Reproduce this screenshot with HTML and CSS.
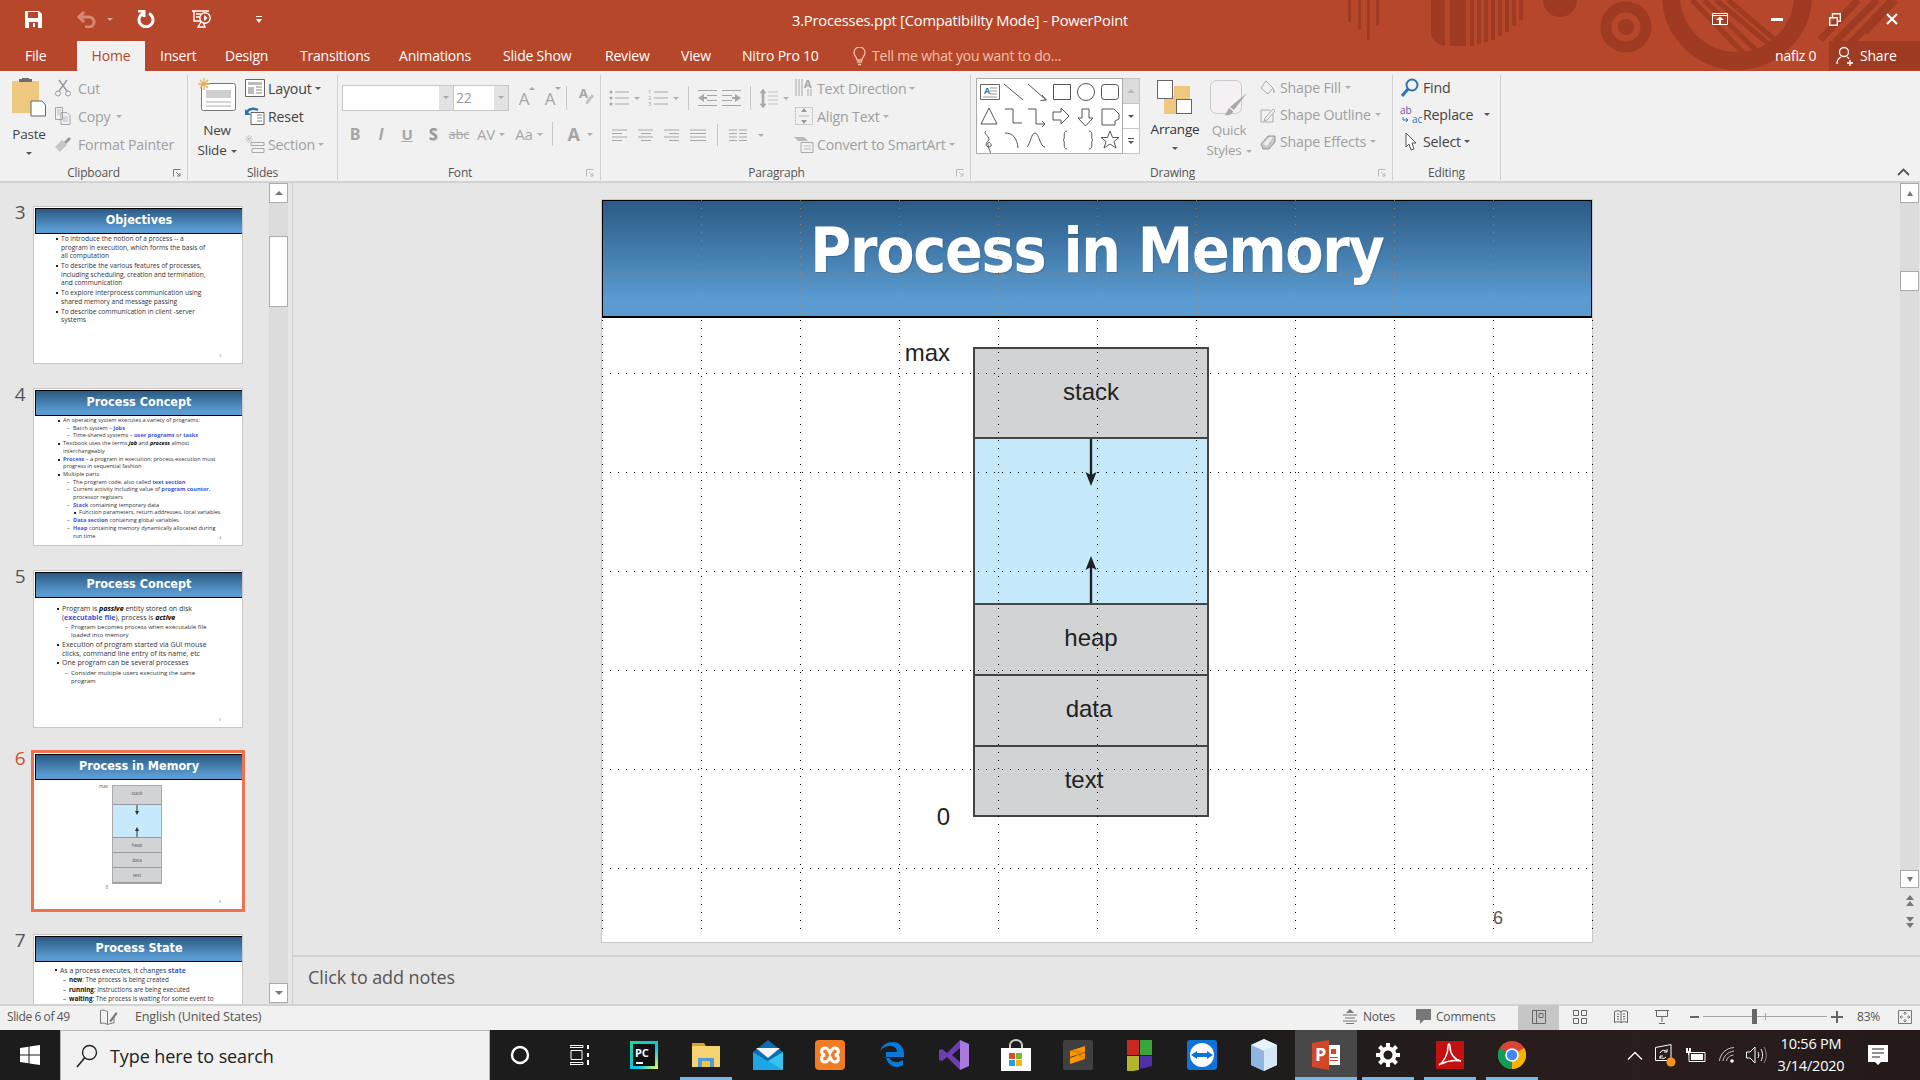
FILE: index.html
```html
<!doctype html>
<html lang="en">
<head>
  <meta charset="utf-8">
  <title>3.Processes.ppt [Compatibility Mode] - PowerPoint</title>
  <link rel="stylesheet" href="styles.css">
</head>

<body>
  <!-- Title bar and tabs -->
  <header class="header">
    <svg class="decor" width="580" height="71" viewBox="0 0 580 71">
      <g fill="#9f3b22">
        <rect x="8" width="3" height="22"/><rect x="18" width="3" height="30"/><rect x="27" width="3" height="40"/><rect x="36" width="3" height="26"/>
        <path d="M91 0h14v46a20 20 0 0 1-14-10z"/>
        <rect x="110" width="16" height="46"/><rect x="130" width="4" height="46"/><rect x="137" width="4" height="44"/><rect x="144" width="4" height="42"/><rect x="151" width="4" height="40"/><rect x="158" width="4" height="36"/><rect x="165" width="4" height="32"/><rect x="172" width="4" height="26"/><rect x="179" width="4" height="20"/>
        <path d="M203 0h34a17 17 0 0 1-34 0z"/>
      </g>
      <circle cx="286" cy="27" r="20" fill="none" stroke="#9f3b22" stroke-width="11"/>
      <circle cx="286" cy="27" r="8" fill="#9f3b22"/>
      <g fill="none" stroke="#9f3b22">
        <circle cx="397" cy="-5" r="66" stroke-width="18"/>
        <path d="M352 0l60 62M364 0l60 58M376 0l60 50M388 0l52 44" stroke-width="5"/>
        <path d="M480 40l38-40M495 42l42-42M510 44l42-44M525 32l30-32" stroke-width="7"/>
      </g>
    </svg>

    <div class="titlebar">
      <div class="qat">
        <svg class="q-save" width="17" height="17" viewBox="0 0 17 17"><path d="M0 0h14l3 3v14H0z" fill="#fff"/><path d="M3 1h10v6H3z" fill="#b7472a"/><path d="M4 11h9v6H4z" fill="#b7472a"/><path d="M8 12h2v4H8z" fill="#fff"/></svg>
        <svg class="q-undo" width="20" height="18" viewBox="0 0 20 18"><path d="M5 7h8a5 5 0 0 1 0 10H9M8 2L3 7l5 5" fill="none" stroke="#d58a75" stroke-width="3"/></svg>
        <i class="caret caret-undo"></i>
        <svg class="q-redo" width="18" height="18" viewBox="0 0 18 18"><path d="M6 3.500a7 7 0 1 0 6 0M7 0v7M7 1H1" fill="none" stroke="#fff" stroke-width="3"/></svg>
        <svg class="q-show" width="20" height="18" viewBox="0 0 20 18"><path d="M0 1h17M2 1v10h7M4 4h5M4 7h4M9 12l-3 5h7l-2-5" fill="none" stroke="#fff" stroke-width="1.400"/><circle cx="13" cy="8" r="5.200" fill="none" stroke="#fff" stroke-width="1.400"/><path d="M12 5l3.500 3-3.500 3z" fill="#fff"/></svg>
        <svg class="q-more" width="6" height="7" viewBox="0 0 6 7"><path d="M0 0h6v1H0zM0 3h6L3 7z" fill="#fff"/></svg>
      </div>
      <div class="doc-title">3.Processes.ppt [Compatibility Mode] - PowerPoint</div>
      <div class="winctl">
        <svg class="w-display" width="16" height="12" viewBox="0 0 16 12"><path d="M.5.500h15v11H.5zM1 2.500h14" fill="none" stroke="#fff"/><path d="M8 3.500l4 3.500H9v4H7V7H4z" fill="#fff"/></svg>
        <svg class="w-min" width="12" height="3" viewBox="0 0 12 3"><path d="M0 0h12v3H0z" fill="#fff"/></svg>
        <svg class="w-max" width="12" height="13" viewBox="0 0 12 13"><path d="M.7 4.700h7.600v7.600H.7zM3.500 4V.7h7.800v7.600H9" fill="none" stroke="#fff" stroke-width="1.400"/></svg>
        <svg class="w-close" width="12" height="12" viewBox="0 0 12 12"><path d="M1 1l10 10M11 1L1 11" stroke="#fff" stroke-width="2.200"/></svg>
      </div>
    </div>

    <nav class="tabs">
      <a class="tab tab-file">File</a>
      <a class="tab tab-home">Home</a>
      <a class="tab tab-insert">Insert</a>
      <a class="tab tab-design">Design</a>
      <a class="tab tab-trans">Transitions</a>
      <a class="tab tab-anim">Animations</a>
      <a class="tab tab-show">Slide Show</a>
      <a class="tab tab-review">Review</a>
      <a class="tab tab-view">View</a>
      <a class="tab tab-nitro">Nitro Pro 10</a>
      <div class="tell">
        <svg width="13" height="19" viewBox="0 0 13 19"><path d="M4 13c0-3-3-4-3-7.500a5.500 5.500 0 0 1 11 0C12 9 9 10 9 13zM4 15h5M5 17.500h3" fill="none" stroke="#efc0ae" stroke-width="1.300"/></svg>
        <span>Tell me what you want to do...</span>
      </div>
      <div class="account">nafiz 0</div>
      <div class="share">
        <svg width="20" height="20" viewBox="0 0 20 20"><circle cx="8" cy="6" r="4.500" fill="none" stroke="#fff" stroke-width="1.300"/><path d="M1 18c0-4 2-6 4-7M11 11c1 .5 2 1 2 2M14 14v6M11 17h6" fill="none" stroke="#fff" stroke-width="1.300"/></svg>
        <span>Share</span>
      </div>
    </nav>
  </header>

  <!-- Ribbon -->
  <div class="ribbon">
    <section class="group g-clipboard">
      <div class="group-body">
        <div class="big big-paste">
          <svg width="34" height="39" viewBox="0 0 34 39"><path d="M0 3h27v32H0z" fill="#edc87e"/><path d="M7 3h13V0h-3v-1h-7v1H7z" fill="#6d6d6d" transform="translate(0 1)"/><path d="M19 23h11l3.500 4v11H19z" fill="#fff" stroke="#666"/></svg>
          <span class="big-text">Paste</span>
          <i class="caret caret-dark"></i>
        </div>
        <div class="cmds">
          <div class="cmd off"><svg class="ic18" viewBox="0 0 18 18"><path d="M5 1l8 11M13 1L5 12" stroke="#999" stroke-width="1.400"/><circle cx="4" cy="14.500" r="2.500" fill="none" stroke="#999"/><circle cx="14" cy="14.500" r="2.500" fill="none" stroke="#999"/></svg><span>Cut</span></div>
          <div class="cmd off"><svg class="ic18" viewBox="0 0 18 18"><path d="M1.500.5h7v12h-7zM7 5.500h6l3 3v9H7z" fill="#f1f1f1" stroke="#a5a5a5"/><path d="M9 10h5M9 12h5M9 14h5M3 3h4M3 5h3M3 7h3" stroke="#bbb"/></svg><span>Copy</span><i class="caret"></i></div>
          <div class="cmd off"><svg class="ic18" viewBox="0 0 18 18"><path d="M1 12l7-7 5 5-7 7z" fill="#c7c7c7"/><path d="M10 7l5-5 2 2-5 5z" fill="#9a9a9a"/></svg><span>Format Painter</span></div>
        </div>
      </div>
      <div class="group-label">Clipboard<svg class="launch" width="8" height="8" viewBox="0 0 8 8"><path d="M.5 7.500v-7h7M3 3l4 4M7 4v3H4" fill="none" stroke="#777"/></svg></div>
    </section>

    <section class="group g-slides">
      <div class="group-body">
        <div class="big big-new">
          <svg width="38" height="34" viewBox="0 0 38 34"><rect x="3.500" y="5.500" width="34" height="27" rx="2" fill="#fff" stroke="#777"/><path d="M8 12h25v8H8z" fill="#cfcfcf"/><path d="M8 24h25M8 28h25" stroke="#aaa"/><path d="M6 0v12M0 6h12M2 2l8 8M10 2l-8 8" stroke="#e6b25a" stroke-width="1.300"/></svg>
          <span class="big-text big-new-text">New</span>
          <span class="big-text">Slide<i class="caret caret-dark caret-inline"></i></span>
        </div>
        <div class="cmds cmds-slides">
          <div class="cmd"><svg class="ic20" viewBox="0 0 20 18"><path d="M.5.500h19v17H.5z" fill="#fff" stroke="#666"/><path d="M3 3h14v3H3zM3 8h6v7H3z" fill="#bcbcbc"/><path d="M11 8h6M11 11h6M11 14h6" stroke="#888"/></svg><span>Layout</span><i class="caret caret-dark"></i></div>
          <div class="cmd"><svg class="ic20" viewBox="0 0 20 18"><path d="M6 5.500h13v12H6z" fill="#fff" stroke="#666"/><path d="M12 8h5M12 11h5M12 14h5" stroke="#888"/><path d="M1 8c0-5 6-8 12-5" fill="none" stroke="#2e74b5" stroke-width="2.500"/><path d="M0 2v6h6z" fill="#2e74b5"/></svg><span>Reset</span></div>
          <div class="cmd off"><svg class="ic20" viewBox="0 0 20 18"><path d="M6 7.500h13v3H6zM7 13.500h12v4H7z" fill="#f1f1f1" stroke="#aaa"/><path d="M4 0v8M0 4h8M1 1l6 6M7 1L1 7" stroke="#c8c8c8"/></svg><span>Section</span><i class="caret"></i></div>
        </div>
      </div>
      <div class="group-label">Slides</div>
    </section>

    <section class="group g-font">
      <div class="group-body col">
        <div class="font-row">
          <div class="combo combo-name"><b></b></div>
          <div class="combo combo-size"><span>22</span><b></b></div>
          <span class="fbtn fbtn-grow">A<i class="tri"></i></span>
          <span class="fbtn fbtn-shrink">A<i class="tri tri-down"></i></span>
          <i class="vsep vsep-font"></i>
          <svg class="clear-ic" width="16" height="24" viewBox="0 -4 16 24"><text x="1" y="12" class="ic-a">A</text><path d="M8 15l6-7 2 2-6 8H8z" fill="#c5c5c5"/></svg>
        </div>
        <div class="font-row font-row2">
          <span class="fbtn bold">B</span>
          <span class="fbtn ital">I</span>
          <span class="fbtn under">U</span>
          <span class="fbtn bold shadowed">S</span>
          <span class="fbtn strike">abc</span>
          <span class="fbtn fbtn-caret">AV<i class="caret"></i></span>
          <span class="fbtn fbtn-caret">Aa<i class="caret"></i></span>
          <i class="vsep"></i>
          <span class="fbtn fbtn-color">A<i class="caret"></i></span>
        </div>
      </div>
      <div class="group-label label-shift">Font<svg class="launch launch-off" width="8" height="8" viewBox="0 0 8 8"><path d="M.5 7.500v-7h7M3 3l4 4M7 4v3H4" fill="none" stroke="#bbb"/></svg></div>
    </section>

    <section class="group g-para">
      <div class="group-body">
        <div class="col para-left">
          <div class="para-row">
            <svg width="20" height="16" viewBox="0 0 20 16"><g fill="#a8a8a8"><circle cx="2" cy="2" r="1.500"/><circle cx="2" cy="8" r="1.500"/><circle cx="2" cy="14" r="1.500"/></g><path d="M6 2h14M6 8h14M6 14h14" stroke="#a8a8a8"/></svg>
            <i class="caret"></i>
            <svg class="para-num" width="20" height="18" viewBox="0 0 20 18"><text x="0" y="5" class="ic-n">1</text><text x="0" y="11" class="ic-n">2</text><text x="0" y="17" class="ic-n">3</text><path d="M6 3h14M6 9h14M6 15h14" stroke="#a8a8a8"/></svg>
            <i class="caret"></i>
            <i class="vsep vsep-para"></i>
            <svg width="19" height="16" viewBox="0 0 19 16"><path d="M0 .5h19M9 5.500h10M9 10.500h10M0 15.500h19" stroke="#a8a8a8"/><path d="M0 8l6-4v3h3v2H6v3z" fill="#a8a8a8"/></svg>
            <svg width="19" height="16" viewBox="0 0 19 16"><path d="M0 .5h19M0 5.500h10M0 10.500h10M0 15.500h19" stroke="#a8a8a8"/><path d="M19 8l-6-4v3h-3v2h3v3z" fill="#a8a8a8"/></svg>
            <i class="vsep vsep-para"></i>
            <svg width="18" height="19" viewBox="0 0 18 19"><path d="M3 0l3 4H4v11h2l-3 4-3-4h2V4H0zM8 3h10M8 7h10M8 11h10M8 15h10" fill="#a8a8a8" stroke="#a8a8a8" stroke-width=".6"/></svg>
            <i class="caret"></i>
          </div>
          <div class="para-row para-row2">
            <svg width="15" height="13" viewBox="0 0 15 13"><path d="M0 1h15M0 4.500h10M0 8h15M0 11.500h10" stroke="#a8a8a8"/></svg>
            <svg width="15" height="13" viewBox="0 0 15 13"><path d="M0 1h15M3 4.500h10M0 8h15M3 11.500h10" stroke="#a8a8a8"/></svg>
            <svg width="15" height="13" viewBox="0 0 15 13"><path d="M0 1h15M5 4.500h10M0 8h15M5 11.500h10" stroke="#a8a8a8"/></svg>
            <svg width="16" height="13" viewBox="0 0 16 13"><path d="M0 1h16M0 4.500h16M0 8h16M0 11.500h16" stroke="#a8a8a8"/></svg>
            <i class="vsep vsep-col"></i>
            <svg width="18" height="13" viewBox="0 0 18 13"><path d="M0 1h8M10 1h8M0 4.500h8M10 4.500h8M0 8h8M10 8h8M0 11.500h8M10 11.500h8" stroke="#a8a8a8"/></svg>
            <i class="caret"></i>
          </div>
        </div>
        <div class="cmds cmds-para">
          <div class="cmd off"><svg class="ic-tall" viewBox="0 -3 20 26"><path d="M2 1v17M5 1v17M8 1v17" stroke="#aaa"/><text x="10" y="10" class="ic-a ic-a-sm">A</text><path d="M14 11v7M17 11v7" stroke="#aaa"/></svg><span>Text Direction</span><i class="caret"></i></div>
          <div class="cmd off"><svg class="ic20" viewBox="0 0 20 20"><path d="M1.500 1.500h17v17h-17z" fill="none" stroke="#bbb" stroke-dasharray="2 1"/><path d="M5 10h10" stroke="#bbb"/><path d="M10 2l3 4H7zM10 18l3-4H7z" fill="#999"/></svg><span>Align Text</span><i class="caret"></i></div>
          <div class="cmd off"><svg class="ic20" viewBox="0 0 20 20"><path d="M0 3h10l4 4H4z" fill="#b9b9b9"/><path d="M7 8.500h12v10H7z" fill="#f1f1f1" stroke="#aaa"/><path d="M10 12h7M10 15h7" stroke="#bbb"/></svg><span>Convert to SmartArt</span><i class="caret"></i></div>
        </div>
      </div>
      <div class="group-label label-shift">Paragraph<svg class="launch launch-off" width="8" height="8" viewBox="0 0 8 8"><path d="M.5 7.500v-7h7M3 3l4 4M7 4v3H4" fill="none" stroke="#bbb"/></svg></div>
    </section>

    <section class="group g-draw">
      <div class="group-body">
        <div class="gallery">
          <svg width="146" height="74" viewBox="0 0 146 74">
            <g fill="none" stroke="#555" stroke-width="1">
              <path d="M3.500 5.500h19v15h-19z" stroke="#666"/>
              <path d="M13 9h7M13 12h7M13 15h7M6 18h14" stroke="#999"/>
              <path d="M27 5l19 16M51 5l18 16"/>
              <path d="M65 16l4.500 5-6 .5" stroke="#555"/>
              <path d="M76.500 5.500h17v15h-17z"/>
              <circle cx="109" cy="13" r="8.500"/>
              <rect x="124.500" y="5.500" width="17" height="15" rx="3"/>
              <path d="M12 29l8 16H4zM28 30h8v14h9M51 30h8v15h8"/>
              <path d="M65 42l3 3-3 3"/>
              <path d="M76 33h8v-4l8 8-8 8v-4h-8zM105 30h7v9h4l-7.500 8-7.500-8h4zM125 30h12l5 5v5l-4 2v4h-13z"/>
              <path d="M9 52c-4 3 6 6 2 10-3 3-2 6 1 6 5 0 0-7-1-4-1 4 4 10 2 11M28 54c8 0 12 5 13 15M50 68c4-4 4-14 8-14s5 14 10 14M90 52c-5 0-1 8-4 9 3 1-1 9 4 9M112 52c5 0 1 8 4 9-3 1 1 9-4 9"/>
              <path d="M133 52l2.500 6.500h6.500l-5 4 2 6.500-6-4-6 4 2-6.500-5-4h6.500z"/>
            </g>
            <text x="7" y="15" class="ic-a ic-a-blue">A</text>
          </svg>
        </div>
        <div class="gallery-scroll">
          <span class="gs gs-up"><i class="tri-lg"></i></span>
          <span class="gs"><i class="caret caret-dark"></i></span>
          <span class="gs gs-more"><i class="bar"></i><i class="caret caret-dark"></i></span>
        </div>
        <div class="big big-arrange">
          <svg width="36" height="34" viewBox="0 0 36 34"><path d="M17 8h16v18H17z M7 18h18v18H7z" fill="#edc87e" transform="translate(0 -2)"/><rect x=".5" y=".5" width="15" height="18" fill="#fff" stroke="#666"/><rect x="19.500" y="19.500" width="15" height="14" fill="#fff" stroke="#666"/></svg>
          <span class="big-text">Arrange</span>
          <i class="caret caret-dark"></i>
        </div>
        <div class="big big-quick off">
          <svg width="38" height="38" viewBox="0 0 38 38"><rect x=".5" y=".5" width="31" height="33" rx="6" fill="#f4f0f4" stroke="#c9c9c9"/><path d="M37 13L24 30l-4-3zM19 28l4 3c0 3-4 5-8 4z" fill="#a9a9a9"/></svg>
          <span class="big-text">Quick</span>
          <span class="big-text">Styles<i class="caret caret-inline"></i></span>
        </div>
        <div class="cmds cmds-shape">
          <div class="cmd off"><svg class="ic16" viewBox="0 0 16 16"><path d="M6 1l7 7-5 6-7-6z" fill="#f1f1f1" stroke="#aaa"/><path d="M13 8c2 2 2 4 1 5s-1-2-1-5z" fill="#aaa"/></svg><span>Shape Fill</span><i class="caret"></i></div>
          <div class="cmd off"><svg class="ic16" viewBox="0 0 16 16"><path d="M1 3h9M1 3v12h12V7" fill="none" stroke="#aaa"/><path d="M5 11l8-9 2 2-8 9-3 1z" fill="#f1f1f1" stroke="#aaa"/></svg><span>Shape Outline</span><i class="caret"></i></div>
          <div class="cmd off"><svg class="ic16" viewBox="0 0 16 16"><path d="M1 10l7-8h7v6l-6 7H3z" fill="#c7c7c7" stroke="#999"/><path d="M3 10l7-7h3L7 12z" fill="#eee"/></svg><span>Shape Effects</span><i class="caret"></i></div>
        </div>
      </div>
      <div class="group-label label-shift">Drawing<svg class="launch launch-off" width="8" height="8" viewBox="0 0 8 8"><path d="M.5 7.500v-7h7M3 3l4 4M7 4v3H4" fill="none" stroke="#bbb"/></svg></div>
    </section>

    <section class="group g-edit">
      <div class="group-body">
        <div class="cmds cmds-edit">
          <div class="cmd"><svg class="ic20" viewBox="0 0 20 20"><circle cx="12" cy="7" r="5.500" fill="none" stroke="#2e74b5" stroke-width="2"/><path d="M8 11l-6 7" stroke="#2e74b5" stroke-width="3"/></svg><span>Find</span></div>
          <div class="cmd"><svg class="ic-rep-box" viewBox="0 -3 24 26"><text x="0" y="9" class="ic-rep ic-rep-p">ab</text><text x="12" y="18" class="ic-rep ic-rep-b">ac</text><path d="M3 12v3h5M6 13l2 2-2 2" fill="none" stroke="#2e74b5"/></svg><span>Replace</span><i class="caret caret-dark caret-rep"></i></div>
          <div class="cmd"><svg class="ic20" viewBox="0 0 20 20"><path d="M6 1v14l3-3 2 6 3-1-2-6h4z" fill="#fff" stroke="#555"/></svg><span>Select</span><i class="caret caret-dark"></i></div>
        </div>
      </div>
      <div class="group-label">Editing</div>
    </section>

    <svg class="collapse" width="13" height="8" viewBox="0 0 13 8"><path d="M1 7l5.500-5.500L12 7" fill="none" stroke="#555" stroke-width="1.800"/></svg>
  </div>

  <!-- Workspace -->
  <main class="workspace">
    <aside class="panel">
      <div class="thumbs">
        <div class="thumb-row">
          <span class="num">3</span>
          <div class="thumb">
            <h4 class="thumb-title">Objectives</h4>
            <div class="thumb-body body3">
              <p class="l1">To introduce the notion of a process -- a<br>program in execution, which forms the basis of<br>all computation</p>
              <p class="l1">To describe the various features of processes,<br>including scheduling, creation and termination,<br>and communication</p>
              <p class="l1">To explore interprocess communication using<br>shared memory and message passing</p>
              <p class="l1">To describe communication in client -server<br>systems</p>
            </div>
            <span class="thumb-page">3</span>
          </div>
        </div>
        <div class="thumb-row">
          <span class="num">4</span>
          <div class="thumb">
            <h4 class="thumb-title">Process Concept</h4>
            <div class="thumb-body body4">
              <p class="l1">An operating system executes a variety of programs:</p>
              <p class="l2">Batch system – <b>jobs</b></p>
              <p class="l2">Time-shared systems – <b>user programs</b> or <b>tasks</b></p>
              <p class="l1">Textbook uses the terms <em>job</em> and <em>process</em> almost<br>interchangeably</p>
              <p class="l1"><b>Process</b> – a program in execution; process execution must<br>progress in sequential fashion</p>
              <p class="l1">Multiple parts</p>
              <p class="l2">The program code, also called <b>text section</b></p>
              <p class="l2">Current activity including value of <b>program counter</b>,<br>processor registers</p>
              <p class="l2"><b>Stack</b> containing temporary data</p>
              <p class="l3">Function parameters, return addresses, local variables</p>
              <p class="l2"><b>Data section</b> containing global variables</p>
              <p class="l2"><b>Heap</b> containing memory dynamically allocated during<br>run time</p>
            </div>
            <span class="thumb-page">4</span>
          </div>
        </div>
        <div class="thumb-row">
          <span class="num">5</span>
          <div class="thumb">
            <h4 class="thumb-title">Process Concept</h4>
            <div class="thumb-body body5">
              <p class="l1">Program is <em>passive</em> entity stored on disk<br>(<b>executable file</b>), process is <em>active</em></p>
              <p class="l2">Program becomes process when executable file<br>loaded into memory</p>
              <p class="l1">Execution of program started via GUI mouse<br>clicks, command line entry of its name, etc</p>
              <p class="l1">One program can be several processes</p>
              <p class="l2">Consider multiple users executing the same<br>program</p>
            </div>
            <span class="thumb-page">5</span>
          </div>
        </div>
        <div class="thumb-row">
          <span class="num num-active">6</span>
          <div class="thumb thumb-active">
            <h4 class="thumb-title">Process in Memory</h4>
            <div class="mini">
              <div class="mini-labels"><span>max</span><span>0</span></div>
              <div class="mini-stack">
                <div class="mini-seg mini-stack-seg">stack</div>
                <div class="mini-free">
                  <svg width="6" height="10" viewBox="0 0 6 10"><path d="M3 0v7" stroke="#333"/><path d="M1 6h4l-2 4z" fill="#333"/></svg>
                  <svg width="6" height="10" viewBox="0 0 6 10"><path d="M3 10V3" stroke="#333"/><path d="M1 4h4L3 0z" fill="#333"/></svg>
                </div>
                <div class="mini-seg">heap</div>
                <div class="mini-seg">data</div>
                <div class="mini-seg">text</div>
              </div>
            </div>
            <span class="thumb-page">6</span>
          </div>
        </div>
        <div class="thumb-row">
          <span class="num">7</span>
          <div class="thumb">
            <h4 class="thumb-title">Process State</h4>
            <div class="thumb-body body7">
              <p class="l1">As a process executes, it changes <b>state</b></p>
              <p class="l2"><strong>new</strong>: The process is being created</p>
              <p class="l2"><strong>running</strong>: Instructions are being executed</p>
              <p class="l2"><strong>waiting</strong>: The process is waiting for some event to</p>
            </div>
          </div>
        </div>
      </div>
      <div class="vscroll vscroll-thumbs">
        <span class="sbtn"><i class="tri-lg"></i></span>
        <span class="sthumb sthumb-left"></span>
        <span class="sbtn sbtn-end"><i class="tri-lg tri-lg-down"></i></span>
      </div>
    </aside>

    <div class="editor">
      <div class="stage">
        <article class="slide">
          <h1 class="slide-title">Process in Memory</h1>
          <div class="diagram">
            <div class="labels"><span>max</span><span>0</span></div>
            <div class="stack">
              <div class="seg seg-stack">stack</div>
              <div class="seg-free">
                <svg width="12" height="47" viewBox="0 0 12 47"><path d="M6 0v40" stroke="#222" stroke-width="2.400"/><path d="M.5 33l5.500 3 5.500-3-5.500 14z" fill="#222"/></svg>
                <svg width="12" height="47" viewBox="0 0 12 47"><path d="M6 47V7" stroke="#222" stroke-width="2.400"/><path d="M.5 14l5.500-3 5.500 3L6 0z" fill="#222"/></svg>
              </div>
              <div class="seg seg-heap">heap</div>
              <div class="seg seg-data">data</div>
              <div class="seg seg-text">text</div>
            </div>
          </div>
          <span class="slide-num">6</span>
          <svg class="grid" width="991" height="743" viewBox="0 0 991 743">
            <g class="grid-title">
              <path d="M8 74.500H985"/>
              <path d="M99.500 0v116M198.500 0v116M297.500 0v116M396.500 0v116M495.500 0v116M594.500 0v116M693.500 0v116M792.500 0v116M891.500 0v116"/>
            </g>
            <g class="grid-body">
              <path d="M8 173.500H985M8 272.500H985M8 371.500H985M8 470.500H985M8 569.500H985M8 668.500H985"/>
              <path d="M.5 120v615M99.500 120v615M198.500 120v615M297.500 120v615M396.500 120v615M495.500 120v615M594.500 120v615M693.500 120v615M792.500 120v615M891.500 120v615M990.500 120v615"/>
            </g>
          </svg>
        </article>
        <div class="vscroll vscroll-main">
          <span class="sbtn"><i class="tri-sm"></i></span>
          <span class="sthumb sthumb-main"></span>
          <span class="sbtn sbtn-end"><i class="tri-sm tri-sm-down"></i></span>
          <svg class="page-btn" width="10" height="11" viewBox="0 0 10 11"><path d="M5 0l4 5H1zM5 6l4 5H1z" fill="#777"/></svg>
          <svg class="page-btn page-btn-next" width="10" height="11" viewBox="0 0 10 11"><path d="M5 5L1 0h8zM5 11L1 6h8z" fill="#777"/></svg>
        </div>
      </div>
      <div class="notes">Click to add notes</div>
    </div>
  </main>

  <!-- Status bar -->
  <footer class="status">
    <span class="st-slide">Slide 6 of 49</span>
    <svg class="st-book" width="18" height="16" viewBox="0 0 18 16"><path d="M.5 1.500c3-1 5 0 7 1v13c-2-1-4-2-7-1zM14 8v6c-2 0-4 .5-6 1.500" fill="none" stroke="#777"/><path d="M10 11l6-8 1.500 1.500-6 8-2 .5z" fill="#777"/></svg>
    <span class="st-lang">English (United States)</span>
    <div class="st-right">
      <svg width="14" height="15" viewBox="0 0 14 15"><path d="M7 0l4 4H3z" fill="#777"/><path d="M0 6h14M2 9h10M0 12h14M3 14.500h8" stroke="#777"/></svg>
      <span class="st-notes">Notes</span>
      <svg class="st-cic" width="15" height="15" viewBox="0 0 15 15"><path d="M0 0h15v11H8l-4 4v-4H0z" fill="#777"/></svg>
      <span class="st-comments">Comments</span>
      <span class="view view-on"><svg width="14" height="14" viewBox="0 0 14 14"><path d="M.5.500h13v13H.5zM4.500.5v13M7 3.500h4v4H7z" fill="none" stroke="#666"/></svg></span>
      <span class="view"><svg width="14" height="14" viewBox="0 0 14 14"><path d="M.5.500h5v5h-5zM8.500.5h5v5h-5zM.5 8.500h5v5h-5zM8.500 8.500h5v5h-5z" fill="none" stroke="#666"/></svg></span>
      <span class="view"><svg width="14" height="14" viewBox="0 0 14 14"><path d="M.5 1.500c2.500-1 4.500-1 6.500 0 2-1 4-1 6.500 0v11c-2.500-1-4.500-1-6.500 0-2-1-4-1-6.500 0zM7 1.500v11M3 4h2M3 6.500h2M3 9h2M9 4h2M9 6.500h2M9 9h2" fill="none" stroke="#666"/></svg></span>
      <span class="view"><svg width="14" height="14" viewBox="0 0 14 14"><path d="M0 .5h14M1.500 1v5.500h11V1M7 7v5M4 13.500h6" fill="none" stroke="#666"/></svg></span>
      <div class="zoom">
        <i class="z-minus"></i>
        <div class="z-track"><i class="z-thumb"></i><i class="z-tick"></i></div>
        <i class="z-plus"></i>
      </div>
      <span class="z-pct">83%</span>
      <svg class="z-fit" width="14" height="14" viewBox="0 0 14 14"><path d="M.5.500h13v13H.5zM7 2v3M5.500 3.500L7 2l1.500 1.500M7 12V9M5.500 10.500L7 12l1.500-1.500M2 7h3M3.500 5.500L2 7l1.500 1.500M12 7H9M10.500 5.500L12 7l-1.500 1.500" fill="none" stroke="#777"/></svg>
    </div>
  </footer>

  <!-- Taskbar -->
  <div class="taskbar">
    <div class="start"><svg width="20" height="20" viewBox="0 0 20 20"><path d="M0 3l8.500-1.200v7.700H0zM9.500 1.600L20 0v9.500H9.500zM0 10.500h8.500v7.700L0 17zM9.500 10.500H20V20L9.500 18.400z" fill="#fff"/></svg></div>
    <div class="search">
      <svg width="22" height="24" viewBox="0 0 22 24"><circle cx="13.500" cy="8.500" r="7" fill="none" stroke="#222" stroke-width="1.400"/><path d="M8.500 14L1 23" stroke="#222" stroke-width="1.600"/></svg>
      <span>Type here to search</span>
    </div>
    <div class="task-sys">
      <svg width="20" height="20" viewBox="0 0 20 20"><circle cx="10" cy="10" r="8" fill="none" stroke="#fff" stroke-width="2.400"/></svg>
      <svg width="20" height="20" viewBox="0 0 20 20"><path d="M0 .5h13v2H0zM1 5.500h11v9H1zM0 17.500h13v2H0z" fill="none" stroke="#fff"/><path d="M17 0h2v4h-2zM17 8h2v4h-2zM17 15h2v5h-2z" fill="#fff"/></svg>
    </div>
    <div class="apps">
      <span class="app"><svg width="28" height="28" viewBox="0 0 28 28"><defs><linearGradient id="pc" x1="0" y1="0" x2="1" y2="1"><stop offset="0" stop-color="#21d789"/><stop offset=".6" stop-color="#07c3f2"/><stop offset="1" stop-color="#fcf84a"/></linearGradient></defs><path d="M0 0h28v28H0z" fill="url(#pc)"/><path d="M3 3h22v22H3z" fill="#111"/><text x="5" y="16" class="ic-pc">PC</text><path d="M6 21h7v2H6z" fill="#fff"/></svg></span>
      <span class="app app-on"><svg width="28" height="28" viewBox="0 0 28 28"><path d="M0 2h12l2 3H0z" fill="#d9a21b"/><path d="M0 5h28v21H0z" fill="#f7d271"/><path d="M6 17h16v9H6z" fill="#4f9fd6"/><path d="M10 20h8v6h-8z" fill="#f5c242"/></svg></span>
      <span class="app"><svg width="30" height="30" viewBox="0 0 30 30"><path d="M15 0L0 12l15 9 15-9z" fill="#0a6cb5"/><path d="M3 8h24L15 18z" fill="#f4f4f4"/><path d="M0 12v18h30V12L15 21z" fill="#1fa6e6"/><path d="M15 21l15-9v18z" fill="#35c3f0"/></svg></span>
      <span class="app"><svg width="30" height="30" viewBox="0 0 30 30"><rect width="30" height="30" rx="4" fill="#f07c23"/><path d="M10 8c-4 0-5 6 0 7-5 1-4 7 0 7 3 0 4-3 5-5 1 2 2 5 5 5 4 0 5-6 0-7 5-1 4-7 0-7-3 0-4 3-5 5-1-2-2-5-5-5z" fill="none" stroke="#fff" stroke-width="3"/></svg></span>
      <span class="app"><svg width="26" height="30" viewBox="0 0 26 30"><path d="M3 17h22c1-9-4-15-11-15C8 2 3 5 1 11c3-4 7-5 10-5 4 0 7 2 7 6H7c-1 8 3 15 11 15 2 0 5-1 6-2v-5c-4 3-11 3-14-2z" fill="#0a78d7"/></svg></span>
      <span class="app"><svg width="30" height="30" viewBox="0 0 30 30"><path d="M21 0l9 4v22l-9 4z" fill="#a87ae0"/><path d="M21 0L8 13 3 9 0 10v10l3 1 5-4 13 13v-8l-8-7 8-7z" fill="#6b3fb0"/></svg></span>
      <span class="app"><svg width="30" height="32" viewBox="0 0 30 32"><path d="M9 10V6a6 5 0 0 1 12 0v4" fill="none" stroke="#c9c9c9" stroke-width="2"/><path d="M0 9h30v23H0z" fill="#fff"/><path d="M8 14h6v6H8z" fill="#e8492a"/><path d="M15 14h6v6h-6z" fill="#7cb82f"/><path d="M8 21h6v6H8z" fill="#1da1e2"/><path d="M15 21h6v6h-6z" fill="#f6b511"/></svg></span>
      <span class="app"><svg width="30" height="30" viewBox="0 0 30 30"><rect width="30" height="30" rx="2" fill="#404040"/><path d="M22 6L7 11v6l15-5zM22 13L7 18v6l15-5z" fill="#ff9800"/><path d="M7 11l15 6v-4L12 9zM22 13v6L12 15z" fill="#e08600"/></svg></span>
      <span class="app"><svg width="30" height="32" viewBox="0 0 30 32"><path d="M2 1l12 0v15H2z" fill="#c62a1f"/><path d="M15 1h12v15H15z" fill="#3aa53c"/><path d="M2 17h12v14l-12 2z" fill="#b5b52c"/><path d="M15 17h12v10l-12 3z" fill="#5030a8"/></svg></span>
      <span class="app"><svg width="30" height="30" viewBox="0 0 30 30"><rect width="30" height="30" rx="3" fill="#0e72d6"/><circle cx="15" cy="15" r="12" fill="#fff"/><path d="M4 15l6-4v2h10v-2l6 4-6 4v-2H10v2z" fill="#0e72d6"/></svg></span>
      <span class="app"><svg width="28" height="34" viewBox="0 0 28 34"><path d="M14 1l13 6v20l-13 6L1 27V7z" fill="#a9cdf0"/><path d="M14 1l13 6-13 6L1 7z" fill="#e8f3fb"/><path d="M14 13v20L1 27V7z" fill="#8fb6e2"/><path d="M27 7v20l-13 6V13z" fill="#d5e7f7"/></svg></span>
      <span class="app app-ppt"><svg width="28" height="30" viewBox="0 0 28 30"><path d="M15 5h13v20H15z" fill="#fff"/><path d="M19 9h5v5h-5zM18 17h8v1h-8zM18 20h8v1h-8z" fill="#d24726"/><path d="M0 3l17-3v30L0 27z" fill="#d24726"/><text x="3" y="21" class="ic-p">P</text></svg></span>
      <span class="app app-on"><svg width="24" height="24" viewBox="0 0 24 24"><circle cx="12" cy="12" r="6.500" fill="none" stroke="#fff" stroke-width="4"/><path d="M12 0v5M12 19v5M0 12h5M19 12h5M3.500 3.500L7 7M17 17l3.500 3.500M20.500 3.500L17 7M7 17l-3.500 3.500" stroke="#fff" stroke-width="4"/></svg></span>
      <span class="app app-on"><svg width="28" height="28" viewBox="0 0 28 28"><path d="M0 0h28v28H0z" fill="#c41010"/><path d="M3 24c5-3 9-11 9-18 0-4 2-4 2 0 0 7 5 13 11 14-6-1-14 0-20 3" fill="none" stroke="#fff" stroke-width="1.500"/></svg></span>
      <span class="app app-on"><svg width="28" height="28" viewBox="0 0 28 28"><circle cx="14" cy="14" r="14" fill="#db4437"/><path d="M14 14L1.800 7A14 14 0 0 0 14 28z" fill="#0f9d58"/><path d="M14 14v14A14 14 0 0 0 26.200 7z" fill="#f4b400"/><circle cx="14" cy="14" r="6.800" fill="#fff"/><circle cx="14" cy="14" r="5.200" fill="#4285f4"/></svg></span>
    </div>
    <div class="tray">
      <svg class="tr-up" width="16" height="9" viewBox="0 0 16 9"><path d="M1 8.500L8 1.500l7 7" fill="none" stroke="#fff" stroke-width="1.300"/></svg>
      <svg class="tr-sync" width="21" height="23" viewBox="0 0 21 23"><path d="M.5 3.500L16 .5v16H.5z" fill="none" stroke="#fff"/><path d="M5 9a4 4 0 0 1 7-1M11 13a4 4 0 0 1-6 0M12 5v3H9M5 15v-3h3" fill="none" stroke="#fff"/><circle cx="16" cy="18" r="4.500" fill="#f7931e"/></svg>
      <svg class="tr-bat" width="20" height="14" viewBox="0 0 20 14"><path d="M3 4.500h16v9H3z" fill="none" stroke="#fff"/><path d="M5 6h12v6H5zM0 0h2v3H0zM3 0h2v3H3zM0 3h5v2H3v2H2V5H0z" fill="#fff"/></svg>
      <svg class="tr-wifi" width="16" height="16" viewBox="0 0 16 16"><path d="M.5 14C1 7 7 1 15 .5M4 14c.5-5 5-9 11-10M7.500 14c.3-3 3-5.500 7-6" fill="none" stroke="#c8c8c8"/><circle cx="13" cy="14" r="1.800" fill="#fff"/></svg>
      <svg class="tr-vol" width="21" height="18" viewBox="0 0 21 18"><path d="M.5 6h3.500l5-5v16l-5-5H.5z" fill="none" stroke="#fff"/><path d="M12 6c1 2 1 4 0 6M15 3c2 4 2 8 0 12" fill="none" stroke="#fff"/><path d="M18 1c3 5 3 11 0 16" fill="none" stroke="#888"/></svg>
      <div class="clock"><span>10:56 PM</span><span>3/14/2020</span></div>
      <svg class="tr-note" width="20" height="21" viewBox="0 0 20 21"><path d="M0 0h20v17h-7l-3 3-3-3H0z" fill="#fff"/><path d="M4 4h12M4 8h12M4 12h8" stroke="#222"/></svg>
    </div>
  </div>
</body>
</html>
```

FILE: styles.css
```css
* {
  box-sizing: border-box;
}

html, body {
  margin: 0;
  height: 100%;
}

body {
  width: 1920px;
  height: 1080px;
  overflow: hidden;
  display: flex;
  flex-direction: column;
  font-family: "Open Sans", "Noto Sans", sans-serif;
  font-size: 13px;
  letter-spacing: -0.2px;
  color: #444;
  background: #e6e6e6;
}

svg {
  display: block;
  flex: none;
}

i {
  font-style: normal;
}

/* header */
.header {
  position: relative;
  height: 71px;
  flex: none;
  background: #b7472a;
  color: #fff;
}

.decor {
  position: absolute;
  left: 1340px;
  top: 0;
}

.titlebar {
  position: relative;
  height: 41px;
  display: flex;
  align-items: flex-start;
}

.qat {
  width: 640px;
  display: flex;
  align-items: center;
  height: 38px;
}

.q-save { margin-left: 25px; }
.q-undo { margin-left: 34px; }
.q-redo { margin-left: 24px; }
.q-show { margin-left: 37px; }
.q-more { margin-left: 44px; }
.caret-undo { margin-left: 11px; border-top-color: #d58a75; }

.doc-title {
  width: 640px;
  text-align: center;
  line-height: 41px;
  font-size: 14.700px;
}

.winctl {
  flex: 1;
  display: flex;
  align-items: center;
  height: 38px;
  padding-left: 432px;
}

.w-min { margin-left: 43px; }
.w-max { margin-left: 46px; }
.w-close { margin-left: 45px; }

.tabs {
  position: relative;
  height: 30px;
  display: flex;
  font-size: 14px;
  line-height: 30px;
}

.tab {
  color: #fff;
  flex: none;
}

.tab-file { width: 77px; padding-left: 25px; }
.tab-home { width: 68px; background: #f1f1f1; color: #b7472a; text-align: center; margin-right: 15px; }
.tab-insert { width: 65px; }
.tab-design { width: 75px; }
.tab-trans { width: 99px; }
.tab-anim { width: 104px; }
.tab-show { width: 102px; }
.tab-review { width: 76px; }
.tab-view { width: 61px; }
.tab-nitro { width: 111px; }

.tell {
  display: flex;
  align-items: center;
  gap: 6px;
  color: #efc0ae;
  width: 922px;
}

.account {
  width: 54px;
}

.share {
  width: 91px;
  height: 29px;
  background: #9f3b22;
  display: flex;
  align-items: center;
  gap: 4px;
  padding-left: 7px;
}

/* ribbon */
.ribbon {
  position: relative;
  height: 112px;
  flex: none;
  display: flex;
  background: #f1f1f1;
  border-bottom: 2px solid #d2d2d2;
}

.group {
  height: 105px;
  margin-top: 4px;
  border-right: 1px solid #d0d0d0;
  display: flex;
  flex-direction: column;
  flex: none;
}

.group-body {
  height: 90px;
  display: flex;
}

.group-label {
  position: relative;
  text-align: center;
  font-size: 12px;
  line-height: 15px;
  color: #555;
}

.label-shift {
  padding-right: 18px;
}

.launch {
  position: absolute;
  right: 6px;
  top: 4px;
}

.col {
  flex-direction: column;
}

.g-clipboard { width: 188px; }
.g-slides { width: 150px; }
.g-font { width: 263px; }
.g-para { width: 370px; }
.g-draw { width: 422px; }
.g-edit { width: 108px; }

.big {
  display: flex;
  flex-direction: column;
  align-items: center;
  flex: none;
  font-size: 13.500px;
  line-height: 20px;
}

.big-text {
  white-space: nowrap;
}

.big-paste { width: 50px; margin-left: 4px; padding-top: 3px; }
.big-paste .big-text { margin-top: 7px; }
.big-paste .caret { margin-top: 8px; }

.big-new { width: 50px; margin-left: 4px; padding-top: 3px; }
.big-new-text { margin-top: 8px; }

.big-arrange { width: 58px; margin-left: 6px; padding-top: 5px; color: #333; }
.big-arrange .big-text { margin-top: 5px; }
.big-arrange .caret { margin-top: 8px; }

.big-quick { width: 50px; padding-top: 5px; color: #a0a0a0; }
.big-quick .big-text:nth-of-type(1) { margin-top: 2px; }

.off {
  color: #a0a0a0;
}

.caret {
  display: inline-block;
  width: 0;
  height: 0;
  border-left: 3px solid transparent;
  border-right: 3px solid transparent;
  border-top: 3px solid #b0b0b0;
  flex: none;
}

.caret-dark {
  border-top-color: #555;
}

.caret-inline {
  margin-left: 4px;
  vertical-align: middle;
}

.cmds {
  display: flex;
  flex-direction: column;
  margin-top: -1px;
}

.cmd {
  display: flex;
  align-items: center;
  height: 28px;
  gap: 6px;
  font-size: 14.200px;
  white-space: nowrap;
}

.ic18 { width: 18px; height: 18px; }
.ic20 { width: 20px; height: 20px; }
.ic16 { width: 16px; height: 16px; }
.ic-tall { width: 20px; height: 26px; margin: -3px 0; }
.ic-rep-box { width: 24px; height: 26px; margin: -3px -4px -3px 0; }

.cmds-slides { margin-left: 3px; }
.cmds-slides .cmd { gap: 3px; }

/* font group */
.font-row {
  display: flex;
  align-items: center;
  height: 26px;
  margin-top: 10px;
  margin-left: 4px;
}

.font-row2 {
  height: 28px;
  margin-top: 9px;
}

.combo {
  height: 26px;
  background: #fff;
  border: 1px solid #c6c6c6;
  position: relative;
  color: #999;
  font-size: 14px;
  line-height: 24px;
  padding-left: 2px;
  flex: none;
}

.combo b {
  position: absolute;
  right: 0;
  top: 0;
  bottom: 0;
  width: 14px;
  background: #e3e3e3;
}

.combo b::after {
  content: "";
  position: absolute;
  left: 4px;
  top: 10px;
  border-left: 3px solid transparent;
  border-right: 3px solid transparent;
  border-top: 3px solid #aaa;
}

.combo-name { width: 112px; }
.combo-size { width: 55px; border-left: 0; }

.fbtn {
  position: relative;
  width: 26px;
  flex: none;
  text-align: center;
  color: #a6a6a6;
  font-size: 15px;
}

.bold { font-weight: 700; font-size: 16px; }
.ital { font-style: italic; font-weight: 700; font-size: 16px; }
.under { text-decoration: underline; font-weight: 700; font-size: 15px; }
.shadowed { text-shadow: 1px 1px 1px #ccc; color: #999; }
.strike { text-decoration: line-through; font-size: 13px; }

.fbtn-grow { margin-left: 2px; font-size: 17px; }
.fbtn-shrink { font-size: 17px; }

.tri {
  position: absolute;
  right: 2px;
  top: 0;
  border-left: 3px solid transparent;
  border-right: 3px solid transparent;
  border-bottom: 3px solid #a6a6a6;
}

.tri-down {
  border-bottom: 0;
  border-top: 3px solid #a6a6a6;
}

.fbtn-caret {
  width: 38px;
  display: flex;
  align-items: center;
  justify-content: center;
  gap: 4px;
}

.fbtn-color {
  width: 38px;
  display: flex;
  align-items: center;
  justify-content: center;
  gap: 7px;
  margin-left: 2px;
  font-size: 18px;
  font-weight: 700;
}

.vsep {
  width: 1px;
  height: 24px;
  background: #c6c6c6;
  flex: none;
  margin: 0 6px 0 4px;
}

.vsep-font { margin: 0 11px 0 3px; }

.clear-ic { margin-top: -8px; }

.ic-a {
  font: 700 13px "Open Sans", sans-serif;
  fill: #a6a6a6;
}

.ic-a-sm { font-size: 11px; }
.ic-a-blue { font-size: 9px; fill: #2e74b5; }

.ic-n {
  font: 6px "Open Sans", sans-serif;
  fill: #a8a8a8;
}

.ic-rep {
  font: 10px "Open Sans", sans-serif;
  letter-spacing: 0;
}

.ic-rep-p { fill: #7a4fa8; }
.ic-rep-b { fill: #2e74b5; }

/* paragraph group */
.para-left {
  display: flex;
  width: 193px;
  flex: none;
}

.para-row {
  display: flex;
  align-items: center;
  gap: 5px;
  height: 30px;
  margin: 8px 0 0 8px;
}

.para-row2 {
  height: 14px;
  margin-top: 15px;
  margin-left: 11px;
  gap: 11px;
}

.para-num { margin-left: 3px; }
.vsep-para { margin: 0 4px; }
.vsep-col { margin: 0; height: 22px; }

.cmds-para .cmd { gap: 3px; }

/* drawing group */
.gallery {
  width: 147px;
  height: 76px;
  margin: 3px 0 0 5px;
  background: #fff;
  border: 1px solid #ababab;
  flex: none;
}

.gallery-scroll {
  width: 17px;
  height: 76px;
  margin-top: 3px;
  display: flex;
  flex-direction: column;
  flex: none;
}

.gs {
  flex: 1;
  background: #fff;
  border: 1px solid #c6c6c6;
  border-left: 0;
  display: flex;
  flex-direction: column;
  align-items: center;
  justify-content: center;
  gap: 2px;
}

.gs-up {
  background: #dcdcdc;
}

.gs + .gs {
  border-top: 0;
}

.bar {
  width: 6px;
  height: 1px;
  background: #555;
}

.tri-lg {
  width: 0;
  height: 0;
  border-left: 4px solid transparent;
  border-right: 4px solid transparent;
  border-bottom: 4px solid #bbb;
}

.cmds-shape { margin-left: 6px; }
.cmds-shape .cmd { height: 27px; gap: 4px; }

.cmds-edit { margin-left: 7px; }
.cmds-edit .cmd { height: 27px; gap: 3px; color: #444; }
.caret-rep { margin-left: 8px; }

.collapse {
  position: absolute;
  right: 10px;
  top: 97px;
}

/* workspace */
.workspace {
  flex: 1;
  min-height: 0;
  display: flex;
}

.panel {
  width: 293px;
  flex: none;
  display: flex;
  border-right: 1px solid #cfcfcf;
  overflow: hidden;
}

.thumbs {
  width: 269px;
  flex: none;
  padding-top: 23px;
  overflow: hidden;
}

.thumb-row {
  display: flex;
  margin-bottom: 24px;
}

.num {
  width: 33px;
  flex: none;
  padding-left: 7px;
  text-align: center;
  font-size: 19px;
  line-height: 12px;
  color: #555;
}

.num-active {
  color: #d2502e;
}

.thumb {
  position: relative;
  width: 210px;
  height: 158px;
  flex: none;
  background: #fff;
  border: 1px solid #c8c8c8;
  padding: 1px 0 0 1px;
  letter-spacing: 0;
}

.thumb-active {
  outline: 3px solid #f0714f;
  outline-offset: -1px;
}

.thumb-title {
  margin: 0;
  height: 26px;
  border: 1px solid #000;
  border-right: 0;
  background: linear-gradient(#2b5a84, #5a9bd1 85%);
  color: #fff;
  text-align: center;
  font-family: "DejaVu Sans", sans-serif;
  font-stretch: condensed;
  font-size: 12.500px;
  font-weight: 700;
  line-height: 22px;
}

.thumb-page {
  position: absolute;
  right: 21px;
  bottom: 5px;
  font-size: 3px;
  color: #555;
}

.thumb-body {
  white-space: nowrap;
  color: #333;
}

.thumb-body p {
  position: relative;
  margin: 0;
}

.thumb-body b {
  color: #3d55e0;
}

.thumb-body em {
  font-style: italic;
  font-weight: 700;
  color: #000;
}

.thumb-body strong {
  color: #111;
}

.thumb-body .l1::before,
.thumb-body .l3::before {
  content: "";
  position: absolute;
  width: 2px;
  height: 2px;
  background: #222;
  margin-left: -5px;
  margin-top: 3px;
}

.thumb-body .l2::before {
  content: "–";
  position: absolute;
  margin-left: -6px;
}

.body3 { padding: 1px 0 0 26px; font-size: 6.600px; line-height: 8.500px; }
.body3 .l1 { margin-bottom: 1.500px; }

.body4 { padding: 1px 0 0 28px; font-size: 5.600px; line-height: 7.700px; }
.body4 .l2 { padding-left: 10px; }
.body4 .l3 { padding-left: 16px; }

.body5 { padding: 7px 0 0 27px; font-size: 7px; line-height: 8.500px; }
.body5 .l1 { margin-bottom: 1px; }
.body5 .l2 { padding-left: 9px; font-size: 6.100px; line-height: 8px; margin: 1px 0 2px; }

.body7 { padding: 4px 0 0 25px; font-size: 6.900px; line-height: 9.300px; }
.body7 .l2 { padding-left: 9px; font-size: 6.300px; }

.mini {
  display: flex;
  font-size: 4.500px;
  color: #555;
  text-align: center;
}

.mini-labels {
  display: flex;
  flex-direction: column;
  justify-content: space-between;
  align-items: flex-end;
  width: 76px;
  height: 107px;
  margin-top: 3px;
  padding-right: 3px;
}

.mini-stack {
  width: 50px;
  height: 99px;
  margin: 5px 0 0 1px;
  border: 1px solid #aaa;
  display: flex;
  flex-direction: column;
}

.mini-seg {
  height: 15px;
  line-height: 14px;
  background: #d1d3d4;
  border-bottom: 1px solid #999;
}

.mini-stack-seg {
  height: 19px;
}

.mini-free {
  flex: 1;
  background: #c6e9fb;
  border-bottom: 1px solid #999;
  display: flex;
  flex-direction: column;
  justify-content: space-between;
  align-items: center;
}

/* scrollbars */
.vscroll {
  display: flex;
  flex-direction: column;
  flex: none;
  background: #dcdcdc;
}

.vscroll-thumbs {
  width: 19px;
}

.sbtn {
  height: 20px;
  background: #fff;
  border: 1px solid #ababab;
  display: flex;
  align-items: center;
  justify-content: center;
  flex: none;
}

.sthumb {
  width: 100%;
  background: #fff;
  border: 1px solid #ababab;
  flex: none;
}

.sthumb-left {
  height: 71px;
  margin-top: 33px;
}

.sbtn-end {
  margin-top: auto;
  margin-bottom: 1px;
}

.tri-lg-down {
  border-bottom: 0;
  border-top: 4px solid #777;
}

.vscroll-thumbs .sbtn .tri-lg:not(.tri-lg-down) {
  border-bottom-color: #777;
}

.tri-sm {
  width: 0;
  height: 0;
  border-left: 3px solid transparent;
  border-right: 3px solid transparent;
  border-bottom: 5px solid #777;
}

.tri-sm-down {
  border-bottom: 0;
  border-top: 5px solid #777;
}

/* editor */
.editor {
  flex: 1;
  min-width: 0;
  display: flex;
  flex-direction: column;
}

.stage {
  height: 774px;
  display: flex;
  padding: 0 1px 0 308px;
  justify-content: space-between;
  border-bottom: 2px solid #d2d2d2;
}

.slide {
  position: relative;
  width: 992px;
  height: 744px;
  margin-top: 16px;
  background: #fff;
  border: 1px solid #c8c8c8;
  letter-spacing: 0;
  flex: none;
}

.slide-title {
  margin: 0;
  height: 118px;
  border-top: 1px solid #000;
  border-left: 1px solid #000;
  border-right: 1px solid #000;
  border-bottom: 2px solid #000;
  background: linear-gradient(#2b5a84, #5a9bd1 85%);
  color: #fff;
  text-align: center;
  font-family: "DejaVu Sans", sans-serif;
  font-stretch: condensed;
  font-size: 62px;
  font-weight: 700;
  letter-spacing: -1.300px;
  line-height: 100px;
  text-shadow: 1px 1px 1px rgba(0, 0, 0, 0.15);
}

.diagram {
  display: flex;
  font-family: "Liberation Sans", Arial, sans-serif;
  font-size: 24px;
  color: #222;
}

.labels {
  width: 348px;
  height: 492px;
  margin-top: 21px;
  display: flex;
  flex-direction: column;
  justify-content: space-between;
  align-items: flex-end;
}

.stack {
  width: 236px;
  height: 470px;
  margin: 29px 0 0 23px;
  display: flex;
  flex-direction: column;
  border: 2px solid #444;
  text-align: center;
}

.seg {
  background: #d1d3d4;
  border-bottom: 2px solid #444;
}

.seg-stack { height: 90px; line-height: 86px; }
.seg-heap { height: 71px; line-height: 66px; }
.seg-data { height: 71px; line-height: 66px; padding-right: 4px; }
.seg-text { height: 68px; line-height: 66px; padding-right: 14px; border-bottom: 0; }

.seg-free {
  height: 166px;
  background: #c6e9fb;
  border-bottom: 2px solid #444;
  display: flex;
  flex-direction: column;
  justify-content: space-between;
  align-items: center;
}

.slide-num {
  position: absolute;
  left: 891px;
  top: 708px;
  font-family: "Liberation Sans", Arial, sans-serif;
  font-size: 18px;
  color: #555;
}

.grid {
  position: absolute;
  left: 0;
  top: 0;
  shape-rendering: crispEdges;
}

.grid path {
  fill: none;
  stroke-width: 1;
  stroke-dasharray: 1 7;
}

.grid-title path {
  stroke: #c9854a;
  stroke-opacity: 0.7;
}

.grid-body path {
  stroke: #000;
}

.vscroll-main {
  width: 19px;
  height: 772px;
  background: linear-gradient(#dcdcdc 705px, #e6e6e6 705px);
}

.sthumb-main {
  height: 20px;
  margin-top: 68px;
}

.vscroll-main .sbtn-end {
  height: 18px;
  margin-top: auto;
  margin-bottom: 7px;
}

.vscroll-main .page-btn {
  margin: 0 0 11px 5px;
}

.vscroll-main .page-btn-next {
  margin-bottom: 27px;
}

.notes {
  flex: 1;
  padding: 8px 0 0 15px;
  font-size: 18px;
  letter-spacing: -0.1px;
  color: #555;
}

/* status bar */
.status {
  height: 26px;
  flex: none;
  display: flex;
  align-items: center;
  padding-bottom: 3px;
  background: #f1f1f1;
  border-top: 2px solid #d2d2d2;
  font-size: 12px;
  color: #555;
}

.st-slide { margin-left: 7px; width: 93px; letter-spacing: -0.4px; }
.st-lang { margin-left: 17px; font-size: 12.600px; }

.st-right {
  margin-left: auto;
  height: 100%;
  display: flex;
  align-items: center;
  padding-right: 8px;
}

.st-notes { margin-left: 6px; }
.st-cic { margin-left: 21px; }
.st-comments { margin-left: 5px; width: 82px; }

.view {
  width: 41px;
  height: 26px;
  margin-bottom: -3px;
  display: flex;
  align-items: center;
  justify-content: center;
  flex: none;
  padding-bottom: 3px;
}

.view-on {
  background: #c6c6c6;
}

.zoom {
  display: flex;
  align-items: center;
  margin-left: 8px;
  width: 153px;
  gap: 4px;
}

.z-minus {
  width: 9px;
  height: 2px;
  background: #666;
  flex: none;
}

.z-track {
  position: relative;
  width: 124px;
  height: 1px;
  background: #a6a6a6;
  flex: none;
}

.z-thumb {
  position: absolute;
  left: 49px;
  top: -7px;
  width: 5px;
  height: 15px;
  background: #666;
}

.z-tick {
  position: absolute;
  left: 62px;
  top: -3px;
  width: 1px;
  height: 7px;
  background: #a6a6a6;
}

.z-plus {
  position: relative;
  width: 12px;
  height: 2px;
  background: #666;
  flex: none;
}

.z-plus::after {
  content: "";
  position: absolute;
  left: 5px;
  top: -5px;
  width: 2px;
  height: 12px;
  background: #666;
}

.z-pct { margin-left: 14px; width: 41px; }

/* taskbar */
.taskbar {
  height: 50px;
  flex: none;
  display: flex;
  align-items: center;
  background: linear-gradient(90deg, #1c1c1c 60%, #2a1d1c 85%, #241a1a);
  color: #fff;
}

.start {
  width: 60px;
  display: flex;
  justify-content: center;
}

.search {
  width: 430px;
  height: 50px;
  background: #f1f1f1;
  border: 1px solid #b5b5b5;
  border-bottom: 0;
  display: flex;
  align-items: center;
  gap: 12px;
  padding-left: 15px;
  color: #222;
  font-size: 18px;
  letter-spacing: -0.1px;
}

.task-sys {
  width: 124px;
  display: flex;
  align-items: center;
  gap: 40px;
  padding-left: 20px;
  flex: none;
}

.apps {
  display: flex;
  width: 930px;
  flex: none;
  margin-left: -1px;
}

.app {
  position: relative;
  width: 62px;
  height: 50px;
  flex: none;
  display: flex;
  align-items: center;
  justify-content: center;
}

.app-on::after,
.app-ppt::after {
  content: "";
  position: absolute;
  left: 5px;
  right: 5px;
  bottom: 0;
  height: 3px;
  background: #76b9ed;
}

.app-ppt {
  background: #484848;
}

.app-ppt::after {
  left: 0;
  right: 0;
}

.ic-pc {
  font: 700 11px "Open Sans", sans-serif;
  fill: #fff;
}

.ic-p {
  font: 700 18px "Open Sans", sans-serif;
  fill: #fff;
}

.tray {
  flex: 1;
  display: flex;
  align-items: center;
  padding-left: 84px;
}

.tr-sync { margin-left: 12px; }
.tr-bat { margin-left: 10px; }
.tr-wifi { margin-left: 13px; }
.tr-vol { margin-left: 11px; }

.clock {
  width: 82px;
  margin-left: 3px;
  display: flex;
  flex-direction: column;
  align-items: center;
  font-size: 14.500px;
  line-height: 22px;
}

.tr-note { margin-left: 16px; }
```
